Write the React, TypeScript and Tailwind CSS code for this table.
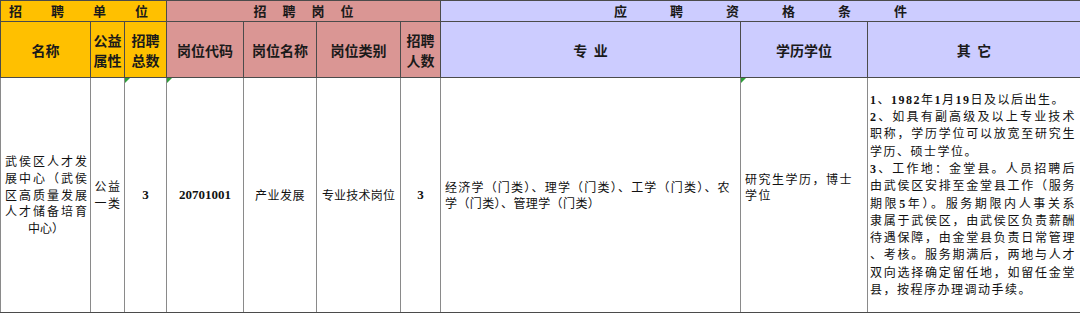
const serif = { fontFamily: "'Liberation Serif', 'Noto Sans CJK SC', serif" }
const head = { fontFamily: "'Noto Sans CJK SC', 'Liberation Sans', sans-serif" }

const Tri = () => (
  <span className="absolute left-0 top-0 w-0 h-0 border-t-[5px] border-t-[#2e9e3a] border-r-[5px] border-r-transparent" />
)

const B = ({ children }: { children: React.ReactNode }) => <b className="font-bold">{children}</b>

export default function App() {
  const otherLines: { node: React.ReactNode; full: boolean }[] = [
    { node: <><B>1</B>、<B>1982</B>年<B>1</B>月<B>19</B>日及以后出生。</>, full: false },
    { node: <><B>2</B>、如具有副高级及以上专业技术</>, full: true },
    { node: <>职称，学历学位可以放宽至研究生</>, full: true },
    { node: <>学历、硕士学位。</>, full: false },
    { node: <><B>3</B>、工作地：金堂县。人员招聘后</>, full: true },
    { node: <>由武侯区安排至金堂县工作（服务</>, full: true },
    { node: <>期限<B>5</B>年）。服务期限内人事关系</>, full: true },
    { node: <>隶属于武侯区，由武侯区负责薪酬</>, full: true },
    { node: <>待遇保障，由金堂县负责日常管理</>, full: true },
    { node: <>、考核。服务期满后，两地与人才</>, full: true },
    { node: <>双向选择确定留任地，如留任金堂</>, full: true },
    { node: <>县，按程序办理调动手续。</>, full: false },
  ]

  const hd = 'border border-[#4b4b4b] text-[14px] font-bold text-[#1a1a1a] text-center align-middle leading-[20px]'
  const bd = 'relative border border-[#4b4b4b] border-l-[#8a8a8a] border-r-[#8a8a8a] text-[12px] text-[#111] align-middle'

  return (
    <div className="w-[1080px] h-[313px] bg-white overflow-hidden" style={head}>
      <table className="table-fixed border-collapse w-[1080px]">
        <colgroup>
          <col className="w-[90px]" />
          <col className="w-[34px]" />
          <col className="w-[42px]" />
          <col className="w-[77px]" />
          <col className="w-[73px]" />
          <col className="w-[84px]" />
          <col className="w-[40px]" />
          <col className="w-[300px]" />
          <col className="w-[127px]" />
          <col className="w-[213px]" />
        </colgroup>
        <tbody>
          <tr className="h-[21px]">
            <td colSpan={3} className={`${hd} bg-[#ffc000] p-0`}>
              <div className="flex justify-center gap-[29px] pr-[10px] text-[13px]">
                {['招', '聘', '单', '位'].map(c => <span key={c}>{c}</span>)}
              </div>
            </td>
            <td colSpan={4} className={`${hd} bg-[#da9694] p-0`}>
              <div className="flex justify-center gap-[16px] text-[13px]">
                {['招', '聘', '岗', '位'].map(c => <span key={c}>{c}</span>)}
              </div>
            </td>
            <td colSpan={3} className={`${hd} bg-[#ccccff] p-0`}>
              <div className="flex justify-center gap-[43px] text-[13px]">
                {['应', '聘', '资', '格', '条', '件'].map(c => <span key={c}>{c}</span>)}
              </div>
            </td>
          </tr>
          <tr className="h-[56px]">
            <td className={`${hd} bg-[#ffc000]`}>名称</td>
            <td className={`${hd} bg-[#ffc000] p-0`}>公益<br />属性</td>
            <td className={`${hd} bg-[#ffc000] p-0`}>招聘<br />总数</td>
            <td className={`${hd} bg-[#da9694]`}>岗位代码</td>
            <td className={`${hd} bg-[#da9694]`}>岗位名称</td>
            <td className={`${hd} bg-[#da9694]`}>岗位类别</td>
            <td className={`${hd} bg-[#da9694] p-0`}>招聘<br />人数</td>
            <td className={`${hd} bg-[#ccccff]`}>专&nbsp;&nbsp;业</td>
            <td className={`${hd} bg-[#ccccff]`}>学历学位</td>
            <td className={`${hd} bg-[#ccccff]`}>其&nbsp;&nbsp;它</td>
          </tr>
          <tr className="h-[235px]" style={serif}>
            <td className={`${bd} pl-[4px] pr-[3px]`}>
              <div className="leading-[16.7px] pt-[2px] whitespace-nowrap">
                {['武侯区人才发', '展中心（武侯', '区高质量发展', '人才储备培育'].map(l => (
                  <div key={l} className="text-justify [text-align-last:justify]">{l}</div>
                ))}
                <div className="text-center">中心）</div>
              </div>
            </td>
            <td className={`${bd} text-center px-0`}>
              <div className="leading-[17px] tracking-[1.5px] pl-[1px] pt-[2px]">公益<br />一类</div>
            </td>
            <td className={`${bd} text-center font-bold text-[13px]`}><Tri />3</td>
            <td className={`${bd} text-center font-bold text-[13px]`}><Tri />20701001</td>
            <td className={`${bd} text-center tracking-[0.5px] pt-[2px] px-0`}>产业发展</td>
            <td className={`${bd} text-center tracking-[0.2px] pt-[2px] px-0 whitespace-nowrap`}>专业技术岗位</td>
            <td className={`${bd} text-center font-bold text-[13px]`}>3</td>
            <td className={`${bd} pl-[4px] pr-[10px]`}>
              <div className="leading-[16px] pt-[2px] tracking-[0.4px]">
                <div className="text-justify [text-align-last:justify]">经济学（门类）、理学（门类）、工学（门类）、农</div>
                <div>学（门类）、管理学（门类）</div>
              </div>
            </td>
            <td className={`${bd} pl-[4px]`}>
              <Tri />
              <div className="leading-[16px] tracking-[1.5px] pb-[14px]">研究生学历，博士<br />学位</div>
            </td>
            <td className={`${bd} pl-[2px] pr-[4px]`}>
              <div className="leading-[17.3px] tracking-[1.5px] pt-[1px]">
                {otherLines.map((l, i) => (
                  <div key={i} className={l.full ? 'text-justify [text-align-last:justify]' : ''}>{l.node}</div>
                ))}
              </div>
            </td>
          </tr>
        </tbody>
      </table>
    </div>
  )
}
